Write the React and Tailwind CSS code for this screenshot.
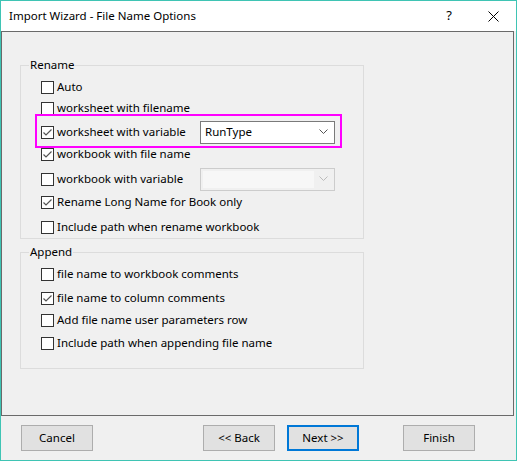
import React from "react";

const font = { fontFamily: '"Noto Sans", "Liberation Sans", sans-serif' };

function Box({ checked }) {
  return (
    <div className="w-[13px] h-[13px] border border-[#333333] bg-white shrink-0 flex items-center justify-center">
      {checked && (
        <svg width="11" height="11" viewBox="0 0 11 11">
          <path d="M1.5 5.5 L4 8 L9.5 2.5" fill="none" stroke="#555555" strokeWidth="1.2" />
        </svg>
      )}
    </div>
  );
}

function Row({ checked, label, className = "", children }) {
  return (
    <div className={"h-[20px] flex items-center pl-[20px] " + className}>
      <Box checked={checked} />
      <span className="ml-[3px] text-[11.5px] text-black whitespace-nowrap">{label}</span>
      {children}
    </div>
  );
}

function Chevron({ color }) {
  return (
    <svg width="9" height="6" viewBox="0 0 9 6">
      <path d="M0.5 0.5 L4.5 4.5 L8.5 0.5" fill="none" stroke={color} strokeWidth="1" />
    </svg>
  );
}

function Btn({ label, primary }) {
  return (
    <div
      className={
        "w-[72px] h-[26px] flex items-center justify-center bg-[#e1e1e1] text-[11.5px] text-black " +
        (primary ? "border-2 border-[#0078d7]" : "border border-[#adadad]")
      }
    >
      {label}
    </div>
  );
}

export default function App() {
  return (
    <div style={font} className="w-[517px] h-[461px] border border-[#3fc4b4] flex flex-col bg-[#f0f0f0]">
      <div className="h-[30px] bg-white flex items-center shrink-0">
        <span className="ml-[8px] text-[11.5px] text-black">Import Wizard - File Name Options</span>
        <span className="ml-auto mr-[36px] text-[13px] text-black">?</span>
        <svg className="mr-[17px]" width="11" height="11" viewBox="0 0 11 11">
          <path d="M0.5 0.5 L10.5 10.5 M10.5 0.5 L0.5 10.5" stroke="#000" strokeWidth="1" />
        </svg>
      </div>
      <div className="h-[385px] w-[513px] border border-[#6a6a6a] shrink-0 relative">
        <div className="ml-[18px] mt-[33px] w-[344px] border border-[#dcdcdc] relative pt-[11px] pb-[1px]">
          <span className="absolute -top-[10px] left-[8px] px-[1px] bg-[#f0f0f0] text-[11.5px] text-black">Rename</span>
          <Row checked={false} label="Auto" />
          <Row checked={false} label="worksheet with filename" className="mt-[1px]" />
          <Row checked={true} label="worksheet with variable" className="mt-[4px]">
            <div className="absolute left-[179px] w-[135px] h-[23px] border border-[#7a7a7a] bg-white flex items-center">
              <span className="ml-[4px] text-[11.5px] text-black">RunType</span>
              <span className="ml-auto mr-[6px] flex"><Chevron color="#555555" /></span>
            </div>
          </Row>
          <Row checked={true} label="workbook with file name" className="mt-[2px]" />
          <Row checked={false} label="workbook with variable" className="mt-[5px]">
            <div className="absolute left-[179px] w-[135px] h-[23px] border border-[#cccccc] bg-[#f0f0f0] flex items-center">
              <div className="ml-[2px] w-[111px] h-[17px] bg-[#f7f7f7]" />
              <span className="ml-auto mr-[6px] flex"><Chevron color="#bbbbbb" /></span>
            </div>
          </Row>
          <Row checked={true} label="Rename Long Name for Book only" className="mt-[3px]" />
          <Row checked={false} label="Include path when rename workbook" className="mt-[5px]" />
        </div>
        <div className="ml-[18px] mt-[13px] w-[344px] border border-[#dcdcdc] relative pt-[11px] pb-[15px]">
          <span className="absolute -top-[10px] left-[8px] px-[1px] bg-[#f0f0f0] text-[11.5px] text-black">Append</span>
          <Row checked={false} label="file name to workbook comments" />
          <Row checked={true} label="file name to column comments" className="mt-[4px]" />
          <Row checked={false} label="Add file name user parameters row" className="mt-[2px]" />
          <Row checked={false} label="Include path when appending file name" className="mt-[3px]" />
        </div>
        <div className="absolute left-[33px] top-[82px] w-[307px] h-[34px] border-2 border-[#ff00ff] pointer-events-none" />
      </div>
      <div className="flex items-center mt-[9px] pl-[20px]">
        <Btn label="Cancel" />
        <div className="ml-[110px]"><Btn label="<< Back" /></div>
        <div className="ml-[12px]"><Btn label="Next >>" primary /></div>
        <div className="ml-[44px]"><Btn label="Finish" /></div>
      </div>
    </div>
  );
}
